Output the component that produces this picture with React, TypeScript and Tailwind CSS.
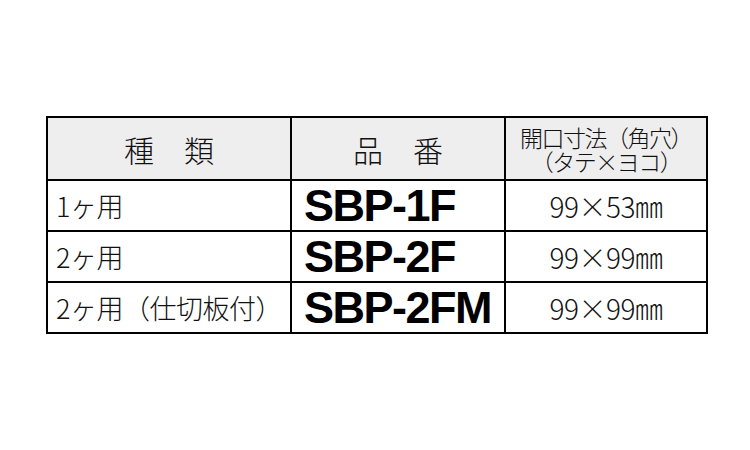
export default function App() {
  const rows = [
    { kind: '1ヶ用', code: 'SBP-1F', size: '99×53㎜' },
    { kind: '2ヶ用', code: 'SBP-2F', size: '99×99㎜' },
    { kind: '2ヶ用（仕切板付）', code: 'SBP-2FM', size: '99×99㎜' },
  ]

  return (
    <div className="w-[750px] h-[450px] bg-white pt-[116px] pl-[46px] text-[#111] font-['Noto_Sans_CJK_JP',sans-serif]">
      <table className="border-collapse border-2 border-black table-fixed w-[660px]">
        <colgroup>
          <col className="w-[244px]" />
          <col className="w-[214px]" />
          <col className="w-[202px]" />
        </colgroup>
        <thead>
          <tr className="h-[63px] bg-[#eeeeee]">
            <th className="border-2 border-black text-[30px] font-light leading-none">種　類</th>
            <th className="border-2 border-black text-[30px] font-light leading-none">品　番</th>
            <th className="border-2 border-black text-[23px] font-light leading-[24px] tracking-[-1.5px] whitespace-nowrap">
              <div>開口寸法（角穴）</div>
              <div>（タテ×ヨコ）</div>
            </th>
          </tr>
        </thead>
        <tbody>
          {rows.map((r) => (
            <tr key={r.code} className="h-[51px]">
              <td className="border-2 border-black pl-[8px] text-[27px] font-light leading-none tracking-[-0.5px] whitespace-nowrap">
                {r.kind}
              </td>
              <td className="border-2 border-black pl-[12px] font-['Liberation_Sans',Arial,sans-serif] font-bold text-[45px] tracking-[-1.5px] leading-none text-black">
                {r.code}
              </td>
              <td className="border-2 border-black text-center text-[28px] font-light leading-none tracking-[-0.5px]">
                {r.size}
              </td>
            </tr>
          ))}
        </tbody>
      </table>
    </div>
  )
}
